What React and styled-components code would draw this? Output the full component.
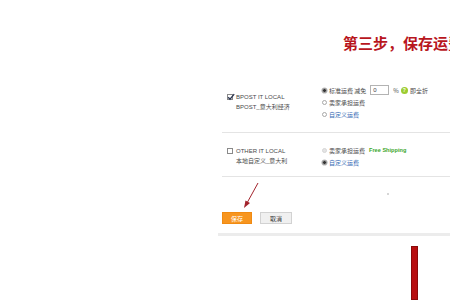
import React from "react";
import styled, { createGlobalStyle } from "styled-components";

const Global = createGlobalStyle`
  html, body { margin: 0; padding: 0; background: #fff; }
  body { font-family: "Liberation Sans", "Noto Sans CJK SC", sans-serif; }
`;

const Page = styled.div`
  width: 450px;
  height: 300px;
  overflow: hidden;
  background: #fff;
  display: flex;
`;

const Panel = styled.div`
  margin-left: 218px;
  width: 232px;
  display: flex;
  flex-direction: column;
  overflow: hidden;
`;

const Title = styled.div`
  padding: 34px 0 0 125px;
  height: 18px;
  line-height: 18px;
  font-family: "Noto Sans CJK SC", sans-serif;
  font-size: 15px;
  font-weight: 700;
  color: #b8161d;
  white-space: nowrap;
`;

const Table = styled.div`
  margin: 26px 0 0 4px;
  display: flex;
  flex-direction: column;
`;

const Row = styled.div`
  display: grid;
  grid-template-columns: 100px 1fr;
  padding: ${(p) => p.$pad};
  border-bottom: 1px solid #e4e4e4;
`;

const NameCell = styled.div`
  display: flex;
  align-items: center;
  padding-left: 5px;
`;

const NameBlock = styled.div`
  display: grid;
  grid-template-columns: 6px 1fr;
  column-gap: 3px;
  align-items: center;
  font-size: 6px;
  line-height: 10px;
  color: #4a4a4a;
  white-space: nowrap;
`;

const Check = styled.span`
  width: 6px;
  height: 6px;
  box-sizing: border-box;
  border: 1px solid #8a8a8a;
  background: #fff;
  position: relative;
  display: block;
`;

const CheckMark = styled.svg`
  position: absolute;
  left: -1px;
  top: -2px;
  width: 8px;
  height: 8px;
`;

const Sub = styled.span`
  grid-column: 2;
`;

const Options = styled.div`
  display: flex;
  flex-direction: column;
`;

const Option = styled.div`
  display: flex;
  align-items: center;
  height: 12px;
  gap: 2px;
  font-size: 6px;
  color: ${(p) => (p.$link ? "#3469b3" : "#4a4a4a")};
  white-space: nowrap;
  font-family: "Noto Sans CJK SC", sans-serif;
`;

const Radio = styled.span`
  width: 5px;
  height: 5px;
  box-sizing: border-box;
  border-radius: 50%;
  border: 1px solid ${(p) => (p.$disabled ? "#d6d6d6" : "#a8a8a8")};
  background: ${(p) => (p.$on ? "#333" : p.$disabled ? "#e4e4e4" : "#fff")};
  box-shadow: ${(p) => (p.$on ? "0 0 0 0.6px #bbb" : "none")};
  flex: none;
`;

const Input = styled.span`
  width: 19px;
  height: 10px;
  box-sizing: border-box;
  border: 1px solid #b3b3b3;
  margin: 0 2px 0 2px;
  padding-left: 2px;
  font-family: "Liberation Sans", sans-serif;
  font-size: 6px;
  line-height: 8px;
  color: #444;
`;

const Help = styled.span`
  width: 7px;
  height: 7px;
  border-radius: 50%;
  background: #9ccc2f;
  color: #fff;
  font-size: 5px;
  font-weight: 700;
  line-height: 7px;
  text-align: center;
  font-family: "Liberation Sans", sans-serif;
`;

const Free = styled.span`
  margin-left: 2px;
  font-family: "Liberation Sans", sans-serif;
  font-weight: 700;
  font-size: 5.6px;
  color: #3aa62b;
`;

const ActionBar = styled.div`
  position: relative;
  display: flex;
  gap: 8px;
  padding: 35px 0 0 4px;
`;

const Button = styled.span`
  height: 12px;
  width: ${(p) => p.$w}px;
  box-sizing: border-box;
  display: flex;
  align-items: center;
  justify-content: center;
  font-family: "Noto Sans CJK SC", sans-serif;
  font-size: 6px;
  background: ${(p) => (p.$primary ? "#f7951f" : "#f0f0f0")};
  border: 1px solid ${(p) => (p.$primary ? "#f08a12" : "#d2d2d2")};
  color: ${(p) => (p.$primary ? "#fff" : "#333")};
`;

const Arrow = styled.svg`
  position: absolute;
  left: 20px;
  top: 0;
  width: 30px;
  height: 34px;
`;

const Dot = styled.span`
  position: absolute;
  left: 169px;
  top: 16px;
  width: 2px;
  height: 2px;
  border-radius: 50%;
  background: #c8c8c8;
`;

const BottomRule = styled.div`
  margin-top: 9px;
  height: 3px;
  background: #ececec;
`;

const RedBar = styled.div`
  margin: 10px 0 0 193px;
  width: 7px;
  height: 60px;
  box-sizing: border-box;
  background: #b80e10;
  border: 1px solid #8a0a0a;
`;

function CheckBox({ checked }) {
  return (
    <Check>
      {checked && (
        <CheckMark viewBox="0 0 8 8">
          <path d="M1.2 4.2 L3 6.2 L7.2 1.2" fill="none" stroke="#2a3550" strokeWidth="1.3" />
        </CheckMark>
      )}
    </Check>
  );
}

export default function App() {
  return (
    <>
      <Global />
      <Page>
        <Panel>
          <Title>第三步，保存运费模板</Title>
          <Table>
            <Row $pad="6px 0 12px 0">
              <NameCell>
                <NameBlock>
                  <CheckBox checked />
                  <span>BPOST IT LOCAL</span>
                  <Sub>BPOST_意大利经济</Sub>
                </NameBlock>
              </NameCell>
              <Options>
                <Option>
                  <Radio $on />
                  <span>标准运费 减免</span>
                  <Input>0</Input>
                  <span>%</span>
                  <Help>?</Help>
                  <span>即全折</span>
                </Option>
                <Option>
                  <Radio />
                  <span>卖家承担运费</span>
                </Option>
                <Option $link>
                  <Radio />
                  <span>自定义运费</span>
                </Option>
              </Options>
            </Row>
            <Row $pad="11px 0 8px 0">
              <NameCell>
                <NameBlock>
                  <CheckBox />
                  <span>OTHER IT LOCAL</span>
                  <Sub>本地自定义_意大利</Sub>
                </NameBlock>
              </NameCell>
              <Options>
                <Option>
                  <Radio $disabled />
                  <span>卖家承担运费</span>
                  <Free>Free Shipping</Free>
                </Option>
                <Option $link>
                  <Radio $on />
                  <span>自定义运费</span>
                </Option>
              </Options>
            </Row>
          </Table>
          <ActionBar>
            <Arrow viewBox="0 0 30 34">
              <line x1="20" y1="6" x2="9" y2="26" stroke="#a3232c" strokeWidth="1" />
              <path d="M6 31 L7.5 23.5 L12 26 Z" fill="#a3232c" />
            </Arrow>
            <Dot />
            <Button $primary $w={30}>保存</Button>
            <Button $w={32}>取消</Button>
          </ActionBar>
          <BottomRule />
          <RedBar />
        </Panel>
      </Page>
    </>
  );
}
